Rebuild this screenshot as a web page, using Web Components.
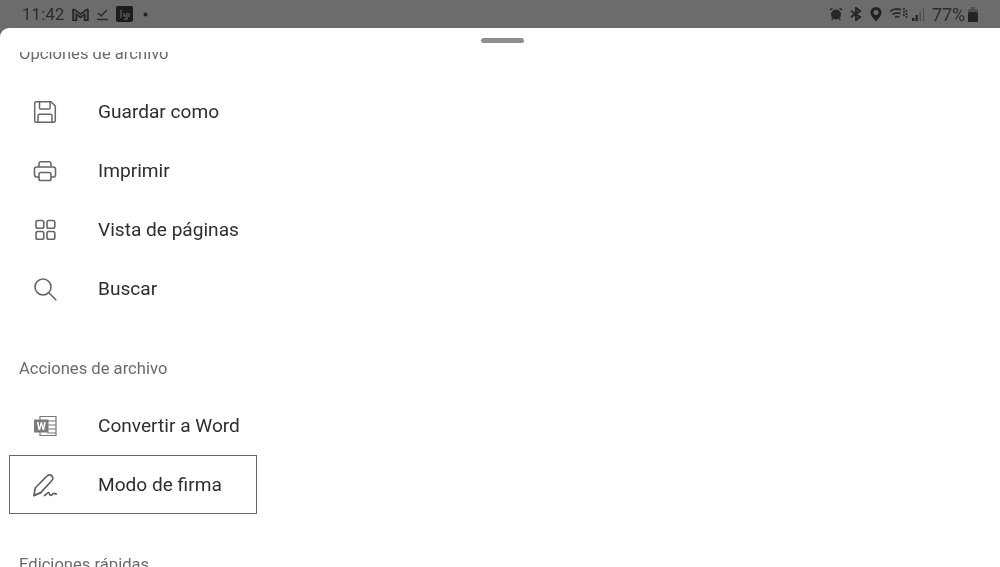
<!DOCTYPE html>
<html lang="es"><head><meta charset="utf-8"><title>Opciones</title>
<style>
html,body{margin:0;padding:0;height:567px;overflow:hidden;background:#6c6c6c;font-family:Roboto,"Noto Sans",sans-serif}
app-shell{display:block}
</style></head><body>
<app-shell>
  <status-bar slot="status"></status-bar>
  <bottom-sheet>
    <menu-section title="Opciones de archivo">
      <menu-item label="Guardar como"><svg viewBox="0 0 24 24" fill="none" stroke="#666" stroke-width="1.5" stroke-linejoin="round"><path d="M1.700 3.200a1.500 1.500 0 0 1 1.500-1.500H18l4.300 4.300v14.800a1.500 1.500 0 0 1-1.500 1.500H3.200a1.500 1.500 0 0 1-1.500-1.500z"/><path d="M6.500 1.700v6.200a1 1 0 0 0 1 1h8.600a1 1 0 0 0 1-1V1.700"/><path d="M5 22.300v-6.600a1.500 1.500 0 0 1 1.500-1.500h11a1.500 1.500 0 0 1 1.500 1.500v6.600"/></svg></menu-item>
      <menu-item label="Imprimir"><svg viewBox="0 0 24 24" fill="none" stroke="#666" stroke-width="1.6" stroke-linejoin="round"><path d="M6 8V4.500A2 2 0 0 1 8 2.800h8a2 2 0 0 1 2 1.700V8"/><path d="M6 18H3.700a2.200 2.200 0 0 1-2.200-2.200v-5.600A2.200 2.200 0 0 1 3.700 8h16.600a2.200 2.200 0 0 1 2.200 2.200v5.600a2.200 2.200 0 0 1-2.200 2.200H18"/><rect x="6" y="13.500" width="12" height="8" rx="1.800"/></svg></menu-item>
      <menu-item label="Vista de páginas"><svg viewBox="0 0 24 24" fill="none" stroke="#666" stroke-width="1.6"><rect x="3" y="2.500" width="7.800" height="7.800" rx="1.800"/><rect x="14" y="2.500" width="7.800" height="7.800" rx="1.800"/><rect x="3" y="13.500" width="7.800" height="7.800" rx="1.800"/><rect x="14" y="13.500" width="7.800" height="7.800" rx="1.800"/></svg></menu-item>
      <menu-item label="Buscar"><svg viewBox="0 0 24 24" fill="none" stroke="#666" stroke-width="1.6" stroke-linecap="round"><circle cx="10" cy="10" r="8"/><path d="M15.800 15.800l7 7"/></svg></menu-item>
    </menu-section>
    <menu-section title="Acciones de archivo">
      <menu-item label="Convertir a Word"><svg viewBox="0 0 24 24"><path d="M7 2.500h16v19H7z" fill="#fff" stroke="#777" stroke-width="1.200"/><path d="M14 7h9M14 11h9M14 15h9M14 19h9" stroke="#777" stroke-width="1.100"/><rect x="1" y="5.500" width="14.500" height="13" fill="#7a7a7a"/><text x="8.250" y="16" text-anchor="middle" font-family="Roboto" font-weight="700" font-size="10.500" fill="#fff">W</text></svg></menu-item>
      <menu-item label="Modo de firma" outlined><svg viewBox="0 0 24 24" fill="none" stroke="#5f5f5f" stroke-width="1.700" stroke-linejoin="round" stroke-linecap="round"><path d="M1 22.500l1.200-7.500L13.500 3.500c1.700-1.700 3.900-2 5.300-.7 1.500 1.300 1.300 3.500-.3 5.200L7.500 19.800z"/><path d="M1 22.500l6.500-2.700"/><path d="M11.500 22.500c1.500-1 3-3 4-3 1.200 0 .6 2.800 2 2.800 1.500 0 2.300-1.900 3.500-1.900.8 0 1.300.6 2.500.6"/></svg></menu-item>
    </menu-section>
    <menu-section title="Ediciones rápidas"></menu-section>
  </bottom-sheet>
</app-shell>
<script>
class AppShell extends HTMLElement{constructor(){super();this.attachShadow({mode:'open'}).innerHTML=`<style>:host{display:flex;flex-direction:column;width:1000px;height:567px;overflow:hidden}</style><slot name="status"></slot><slot></slot>`}}
class StatusBar extends HTMLElement{constructor(){super();this.attachShadow({mode:'open'}).innerHTML=`<style>
:host{display:flex;align-items:center;height:28px;flex:none;background:#6c6c6c;color:#2c2c2c;padding:0 22px 0 22px;box-sizing:border-box;font:16.5px Roboto,sans-serif;filter:blur(.6px)}
.l,.r{display:flex;align-items:center}.sp{flex:1}
svg{display:block;flex:none}
.time{letter-spacing:.3px;margin-right:7px}
.pct{margin:0 3px 0 7px;font-size:18px;letter-spacing:-.1px}
</style>
<div class="l"><span class="time">11:42</span>
<svg width="17" height="13" viewBox="0 0 17 13" style="margin-right:8px"><path d="M1 12.500V1.500h1.500L8.500 6l6-4.500H16v11h-3.500V6.500l-4 3-4-3v6z" fill="#555" stroke="#222" stroke-width="1.500" stroke-linejoin="round"/></svg>
<svg width="11" height="13" viewBox="0 0 11 13" style="margin-right:8px"><path d="M1 5l3 3 6-6" fill="none" stroke="#2a2a2a" stroke-width="1.500"/><path d="M0 11.500h11" stroke="#2a2a2a" stroke-width="1.500"/></svg>
<svg width="17" height="16" viewBox="0 0 17 16" style="margin-right:10px"><rect width="17" height="16" rx="2" fill="#1c1c1c"/><path d="M5 4v8M8 7v3h3V7M8 13h3V7M13 7v4" stroke="#5a5a5a" stroke-width="1.300" fill="none"/></svg>
<svg width="5" height="5" viewBox="0 0 5 5"><circle cx="2.500" cy="2.500" r="2" fill="#222"/></svg></div>
<div class="sp"></div>
<div class="r">
<svg width="14" height="14" viewBox="0 0 14 14" style="margin-right:7px"><circle cx="7" cy="7.500" r="5" fill="#262626"/><path d="M1 3l2.500-2M13 3l-2.500-2M2.500 13l1.500-1.500M11.500 13L10 11.500" stroke="#262626" stroke-width="1.300"/></svg>
<svg width="12" height="14" viewBox="0 0 12 14" style="margin-right:8px"><path d="M1 4l9 6-4 3V1l4 3-9 6" fill="none" stroke="#262626" stroke-width="2"/></svg>
<svg width="12" height="15" viewBox="0 0 12 15" style="margin-right:7px"><path fill-rule="evenodd" d="M6 0a5.500 5.500 0 0 1 5.500 5.500C11.500 9 6 14.500 6 14.500S.5 9 .5 5.500A5.500 5.500 0 0 1 6 0zm0 3a2.500 2.500 0 1 0 0 5 2.500 2.500 0 0 0 0-5z" fill="#222"/></svg>
<svg width="19" height="14" viewBox="0 0 19 14" style="margin-right:4px"><path d="M1 4.500c4-3 8-3 11-1.500M3.500 7.500c2.500-2 5.500-2 8-1M6 10.500c1.500-1 3-1 4.500-.5" fill="none" stroke="#2a2a2a" stroke-width="1.700"/><path d="M15 1v8M17.500 3v9" stroke="#2a2a2a" stroke-width="1.700" stroke-dasharray="2 1"/></svg>
<svg width="13" height="14" viewBox="0 0 13 14"><path d="M0 11h2.500v3H0z" fill="#222"/><path d="M3.500 8H6v6H3.500z" fill="#2a2a2a"/><path d="M7.500 4.500h1.500V14H7.500zM11 1h1.200v13H11z" fill="#4f4f4f"/></svg>
<span class="pct">77%</span>
<svg width="10" height="15" viewBox="0 0 10 15"><path d="M3 0h4v2H3z" fill="#505050"/><rect y="2" width="10" height="13" rx="1.500" fill="#505050"/><rect y="5" width="10" height="10" rx="1.500" fill="#242424"/></svg>
</div>`}}
class BottomSheet extends HTMLElement{constructor(){super();this.attachShadow({mode:'open'}).innerHTML=`<style>
:host{display:flex;flex-direction:column;flex:1;min-height:0;background:#fff;border-radius:9px 0 0 0;overflow:hidden;filter:blur(.3px)}
.grip{flex:none;height:24px;display:flex;justify-content:center;padding-top:10px;box-sizing:border-box}
.grip i{display:block;width:43px;height:5px;border-radius:3px;background:#8f8f8f;margin-left:5px}
.view{flex:1;min-height:0;overflow:hidden}
.content{margin-top:-10px}
</style><div class="grip"><i></i></div><div class="view"><div class="content"><slot></slot></div></div>`}}
class MenuSection extends HTMLElement{constructor(){super();const r=this.attachShadow({mode:'open'});r.innerHTML=`<style>
:host{display:block}
h2{margin:0;padding:0 0 0 19px;font:400 16.6px/24px Roboto,sans-serif;color:#6a6a6a;height:24px}
.list{padding:15px 0 13px;border-bottom:1px solid #fcfcfc;margin-bottom:25px}
:host(:first-of-type) .list{padding-top:16px}
</style><h2></h2><div class="list"><slot></slot></div>`;r.querySelector('h2').textContent=this.getAttribute('title');this.removeAttribute('title')}}
class MenuItem extends HTMLElement{constructor(){super();const r=this.attachShadow({mode:'open'});r.innerHTML=`<style>
:host{display:block;height:59px}
.row{display:flex;align-items:center;height:59px;width:248px;margin-left:9px;box-sizing:border-box;color:#2e2e2e;font:400 19.1px/24px Roboto,sans-serif}
:host([outlined]) .row{border:1px solid #666}
.ic{flex:none;width:24px;height:24px;margin-left:24px;margin-right:41px;display:flex}
:host([outlined]) .ic{margin-left:23px}
::slotted(svg){width:24px;height:24px;display:block}
</style><div class="row"><span class="ic"><slot></slot></span><span class="t"></span></div>`;r.querySelector('.t').textContent=this.getAttribute('label')}}
customElements.define('app-shell',AppShell);
customElements.define('status-bar',StatusBar);
customElements.define('bottom-sheet',BottomSheet);
customElements.define('menu-section',MenuSection);
customElements.define('menu-item',MenuItem);
</script>
</body></html>
